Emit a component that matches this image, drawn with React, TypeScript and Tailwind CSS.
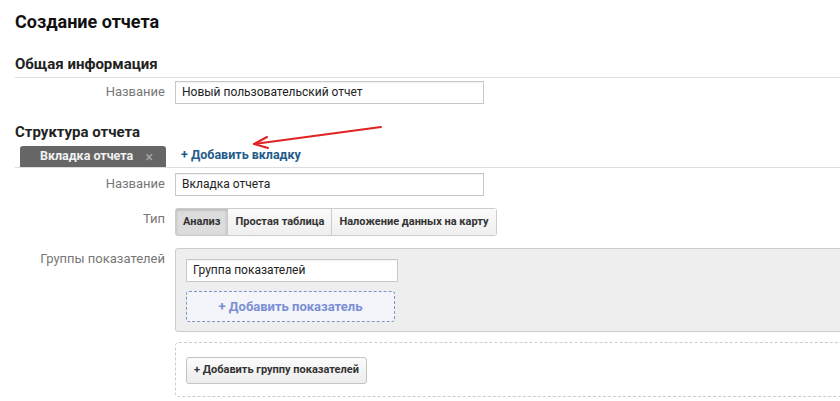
import React from "react";

const labelCls =
  "w-[150px] shrink-0 text-right text-[13px] text-[#777] leading-[22px]";

function Field({
  label,
  children,
  className = "",
}: {
  label: string;
  children: React.ReactNode;
  className?: string;
}) {
  return (
    <div className={`flex gap-[10px] ${className}`}>
      <div className={labelCls}>{label}</div>
      <div className="flex-1">{children}</div>
    </div>
  );
}

function TextBox({ value, width }: { value: string; width: string }) {
  return (
    <div
      className={`${width} h-[23px] border border-[#c8c8c8] bg-white px-[6px] text-[12px] leading-[21px] text-[#222] shadow-[inset_0_1px_1px_rgba(0,0,0,0.06)]`}
    >
      {value}
    </div>
  );
}

export default function App() {
  const types = [
    { label: "Анализ", active: true },
    { label: "Простая таблица", active: false },
    { label: "Наложение данных на карту", active: false },
  ];

  return (
    <div className="relative w-[840px] h-[401px] overflow-hidden bg-white font-['Roboto',_'Liberation_Sans',_sans-serif]">
      <div className="w-[880px] pl-[15px] pt-[10px]">
        {/* Title */}
        <h1 className="text-[18px] leading-[24px] font-bold text-[#111]">
          Создание отчета
        </h1>

        {/* General info */}
        <h2 className="mt-[20px] border-b border-[#ddd] pb-[3px] text-[15px] leading-[20px] font-bold text-[#222]">
          Общая информация
        </h2>
        <Field label="Название" className="mt-[3px]">
          <TextBox value="Новый пользовательский отчет" width="w-[309px]" />
        </Field>

        {/* Structure */}
        <h2 className="mt-[18px] text-[15px] leading-[20px] font-bold text-[#222]">
          Структура отчета
        </h2>
        <div className="mt-[4px] flex items-end gap-[15px] border-b border-[#ddd]">
          <div className="ml-[5px] flex h-[21px] w-[146px] items-center justify-between rounded-t-[3px] bg-[#666] pl-[20px] pr-[13px]">
            <span className="text-[12.5px] font-bold text-[#f2f2f2]">
              Вкладка отчета
            </span>
            <span className="text-[14px] leading-none text-[#aaa]">×</span>
          </div>
          <span className="pb-[2px] text-[12.5px] font-bold text-[#245b8c]">
            + Добавить вкладку
          </span>
        </div>

        <Field label="Название" className="mt-[5px]">
          <TextBox value="Вкладка отчета" width="w-[309px]" />
        </Field>

        <Field label="Тип" className="mt-[12px]">
          <div className="flex h-[28px] w-fit rounded-[3px] border border-[#ccc]">
            {types.map((t, i) => (
              <div
                key={t.label}
                className={`flex items-center px-[7px] text-[11px] font-bold text-[#333] ${
                  i > 0 ? "border-l border-[#ccc]" : ""
                } ${
                  t.active
                    ? "bg-[#dcdcdc] shadow-[inset_0_1px_3px_rgba(0,0,0,0.2)]"
                    : "bg-gradient-to-b from-[#fafafa] to-[#efefef]"
                }`}
              >
                {t.label}
              </div>
            ))}
          </div>
        </Field>

        <Field label="Группы показателей" className="mt-[12px]">
          <div>
            <div className="h-[84px] rounded-[3px] border border-[#ccc] bg-[#eee] px-[10px] pt-[10px]">
              <TextBox value="Группа показателей" width="w-[212px]" />
              <div className="mt-[9px] flex h-[31px] w-[209px] items-center justify-center rounded-[3px] border border-dashed border-[#7f93c9] bg-[#f3f5fb] text-[13px] font-bold text-[#7b8fd4]">
                + Добавить показатель
              </div>
            </div>
            <div className="mt-[10px] h-[55px] rounded-[4px] border border-dashed border-[#ccc] px-[10px] pt-[14px]">
              <div className="flex h-[27px] w-[181px] items-center justify-center rounded-[3px] border border-[#c4c4c4] bg-gradient-to-b from-[#fbfbfb] to-[#ededed] text-[11px] font-bold text-[#333]">
                + Добавить группу показателей
              </div>
            </div>
          </div>
        </Field>
      </div>

      {/* Red annotation arrow */}
      <svg
        className="pointer-events-none absolute left-0 top-0"
        width="840"
        height="401"
        viewBox="0 0 840 401"
      >
        <g
          stroke="#e02222"
          strokeWidth="2"
          fill="none"
          strokeLinecap="round"
          strokeLinejoin="round"
        >
          <path d="M381 127 L254 144" />
          <path d="M267 137 L254 144 L268 148" />
        </g>
      </svg>
    </div>
  );
}
